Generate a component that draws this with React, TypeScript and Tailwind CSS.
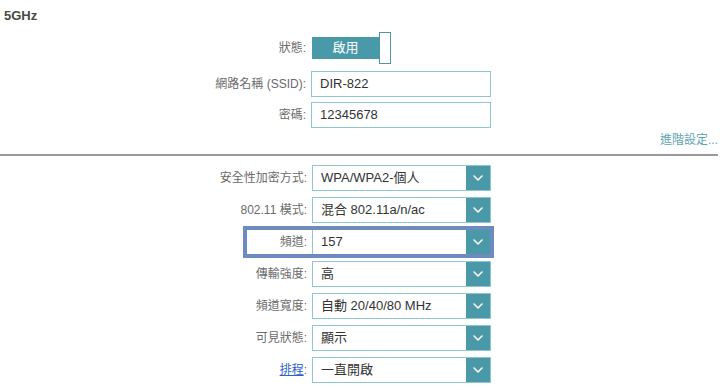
import { ChevronDown } from 'lucide-react';

const font = {
  fontFamily: '"Liberation Sans", Arial, "Noto Sans CJK TC", sans-serif',
};

function Label({ children }: { children: React.ReactNode }) {
  return <span className="whitespace-nowrap text-[12px] text-[#6b6b6b]">{children}</span>;
}

function TextInput({ value }: { value: string }) {
  return (
    <div className="flex h-[26px] w-[180px] items-center border border-[#8ec5cf] bg-white pl-[8px] text-[13px] text-[#333]">
      {value}
    </div>
  );
}

function Select({ value }: { value: string }) {
  return (
    <div className="flex h-[26px] w-[179px] border border-[#8ec5cf] bg-white">
      <div className="flex flex-1 items-center pl-[8px] text-[13px] text-[#333]">{value}</div>
      <div className="flex w-[24px] items-center justify-center bg-[#4a99a8]">
        <ChevronDown className="h-[16px] w-[16px] text-white" strokeWidth={2.25} />
      </div>
    </div>
  );
}

const selects = [
  { label: '安全性加密方式:', value: 'WPA/WPA2-個人' },
  { label: '802.11 模式:', value: '混合 802.11a/n/ac' },
  { label: '頻道:', value: '157', focused: true },
  { label: '傳輸強度:', value: '高' },
  { label: '頻道寬度:', value: '自動 20/40/80 MHz' },
  { label: '可見狀態:', value: '顯示' },
  { label: '排程', value: '一直開啟', link: true },
];

export default function App() {
  return (
    <div className="h-[390px] w-[720px] overflow-hidden bg-white" style={font}>
      <div className="pl-[4px] pt-[8px] text-[13px] font-bold leading-[16px] text-[#4a4a42]">5GHz</div>

      <div className="mt-[8px] flex h-[32px] w-[491px] items-center justify-end gap-[5px]">
        <Label>狀態:</Label>
        <div className="flex w-[180px] items-center">
          <div className="ml-px flex h-[22px] w-[67px] items-center justify-center bg-[#4a99a8] text-[13px] text-white">
            啟用
          </div>
          <div className="h-[32px] w-[12px] border border-[#4a99a8] bg-white" />
        </div>
      </div>

      <div className="mt-[7px] flex w-[491px] flex-col gap-[5px]">
        <div className="flex items-center justify-end gap-[5px]">
          <Label>網路名稱 (SSID):</Label>
          <TextInput value="DIR-822" />
        </div>
        <div className="flex items-center justify-end gap-[5px]">
          <Label>密碼:</Label>
          <TextInput value="12345678" />
        </div>
      </div>

      <div className="mt-[5px] flex h-[14px] items-center justify-end pr-[2px] text-[12px] text-[#5fa3b3]">
        進階設定...
      </div>

      <div className="mt-[7px] w-[718px] border-t-2 border-[#9a9a9a]" />

      <div className="mt-[9px] flex w-[491px] flex-col gap-[6px]">
        {selects.map((s) => {
          const inner = (
            <>
              {s.link ? (
                <span className="whitespace-nowrap text-[12px] text-[#6b6b6b]">
                  <span className="text-[#2a62c9] underline">{s.label}</span>:
                </span>
              ) : (
                <Label>{s.label}</Label>
              )}
              <Select value={s.value} />
            </>
          );
          return s.focused ? (
            <div key={s.label} className="flex justify-end">
              <div className="flex w-[245px] items-center justify-end gap-[5px] outline-4 -outline-offset-1 outline-[#6d8bbd]">
                {inner}
              </div>
            </div>
          ) : (
            <div key={s.label} className="flex items-center justify-end gap-[5px]">
              {inner}
            </div>
          );
        })}
      </div>
    </div>
  );
}
